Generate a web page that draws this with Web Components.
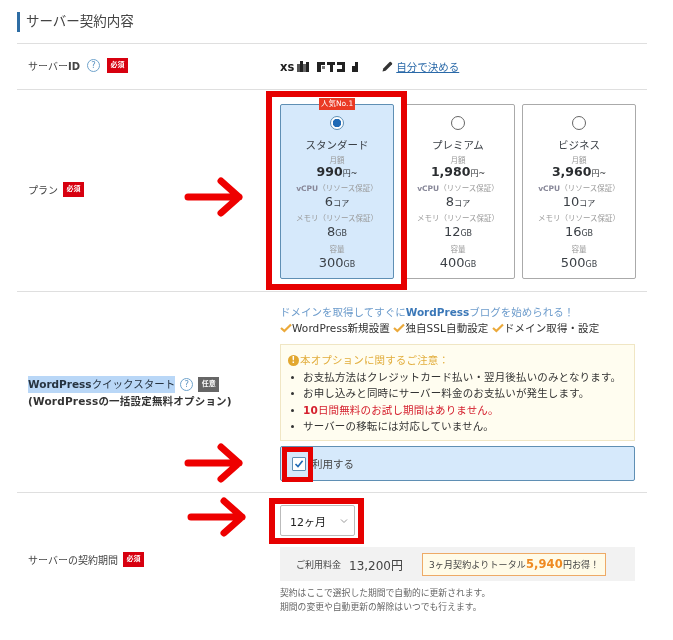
<!DOCTYPE html>
<html lang="ja"><head><meta charset="utf-8"><title>サーバー契約内容</title>
<style>
html,body{margin:0;padding:0;background:#fff}
body{width:673px;height:640px;overflow:hidden;position:relative;font-family:"DejaVu Sans","Noto Sans CJK JP",sans-serif;color:#3a3f45;filter:blur(.35px)}
</style></head><body>
<x-page>
  <x-heading>サーバー契約内容</x-heading>
  <x-row h="46" align="center" pad="0">
    <span slot="label">サーバー<b>ID</b></span><x-help slot="label" style="margin:0 2px"></x-help><x-tag slot="label">必須</x-tag>
    <x-server-id></x-server-id>
  </x-row>
  <x-row h="202" align="center" pad="0">
    <span slot="label">プラン</span><x-tag slot="label">必須</x-tag>
    <x-plans>
      <x-plan selected name="スタンダード" price="990" cpu="6" mem="8" disk="300"></x-plan>
      <x-plan name="プレミアム" price="1,980" cpu="8" mem="12" disk="400"></x-plan>
      <x-plan name="ビジネス" price="3,960" cpu="10" mem="16" disk="500"></x-plan>
    </x-plans>
  </x-row>
  <x-row h="201" align="wp" pad="13">
    <x-wp-label slot="label"></x-wp-label>
    <x-quickstart></x-quickstart>
  </x-row>
  <x-row h="133" align="term" pad="17">
    <span slot="label">サーバーの契約期間</span><x-tag slot="label">必須</x-tag>
    <x-term></x-term>
  </x-row>
</x-page>
<x-arrow style="left:184px;top:177px"></x-arrow>
<x-arrow style="left:184px;top:443px"></x-arrow>
<x-arrow style="left:187px;top:497px"></x-arrow>
<x-redbox style="left:266px;top:91px;width:141px;height:199px" thick="6"></x-redbox>
<x-redbox style="left:282px;top:447px;width:31px;height:35px" thick="5"></x-redbox>
<x-redbox style="left:269px;top:498px;width:95px;height:46px" thick="6"></x-redbox>
<script>
const def=(name,html,init)=>customElements.define(name,class extends HTMLElement{
  connectedCallback(){
    if(this.shadowRoot)return;
    const r=this.attachShadow({mode:'open'});
    r.innerHTML=typeof html==='function'?html(this):html;
    init&&init(this,r);
  }
});
const check='<svg width="12" height="10" viewBox="0 0 12 10" style="vertical-align:-1px"><path d="M1 5 4.4 8 11 1.5" fill="none" stroke="#eba93a" stroke-width="2.2"/></svg>';
def('x-page',`<style>:host{display:block;width:630px;margin-left:17px;padding-top:12px}</style><slot></slot>`);
def('x-heading',`<style>
:host{display:block;height:20px;border-left:3px solid #2e6da4;padding-left:6px;font-size:13.5px;line-height:18px;color:#444;margin-bottom:11px}
</style><slot></slot>`);
def('x-row',e=>{
 const a=e.getAttribute('align');
 const mt=a==='wp'?'align-self:start;padding-top:71px':a==='term'?'align-self:start;padding-top:42px':'align-self:center';
 return `<style>
:host{display:grid;grid-template-columns:263px 1fr;box-sizing:border-box;height:${e.getAttribute('h')}px;border-top:1px solid #dfdfdf;font-size:10px;color:#444;padding-top:${e.getAttribute('pad')}px}
.l{${mt};display:flex;align-items:center;gap:5px;padding-left:11px;margin-top:${a==='wp'||a==='term'?0:-3}px}
.r{min-width:0;align-self:${a==='center'?'center':'start'};padding-right:12px}
</style><div class="l"><slot name="label"></slot></div><div class="r"><slot></slot></div>`});
def('x-tag',`<style>
:host{display:inline-block;background:#d7000f;color:#fff;font-size:7px;line-height:15px;height:15px;padding:0 3.5px;font-weight:700}
</style><slot></slot>`);
def('x-help',`<style>:host{display:inline-flex;width:13px;height:13px;box-sizing:border-box;border:1px solid #6fa3cc;border-radius:50%;color:#5d93c0;font-size:8.5px;align-items:center;justify-content:center;line-height:1}</style>?`);
def('x-server-id',`<style>
:host{display:flex;align-items:center;height:20px;font-size:11.5px;font-weight:700;color:#222}
svg{margin-left:2px}
.edit{margin-left:22px;margin-right:3px}
a{color:#2a69a8;text-decoration:underline;font-weight:400;font-size:10.5px}
</style><span>xs</span>
<svg width="64" height="11" viewBox="0 0 64 11"><g fill="#222">
<rect x="1" y="3" width="3" height="8" fill="#555"/><rect x="4" y="0" width="3" height="11"/><rect x="7" y="3" width="3" height="8" fill="#666"/><rect x="10" y="1" width="3" height="10"/>
<rect x="21" y="1" width="8" height="3"/><rect x="21" y="4" width="4" height="7"/><rect x="26" y="5" width="3" height="3" fill="#777"/>
<rect x="31" y="1" width="8" height="3"/><rect x="34" y="4" width="3" height="7"/>
<rect x="41" y="1" width="8" height="3"/><rect x="46" y="4" width="3" height="7"/><rect x="41" y="8" width="5" height="3"/>
<rect x="56" y="5" width="3" height="6"/><rect x="59" y="1" width="3" height="10"/></g></svg>
<svg class="edit" width="11" height="11" viewBox="0 0 11 11"><path d="M0.5 10.5 1.3 7.4 7.6 1.1a1 1 0 0 1 1.4 0l.9.9a1 1 0 0 1 0 1.4L3.6 9.7Z" fill="#333"/></svg>
<a href="#">自分で決める</a>`);
def('x-plans',`<style>:host{display:grid;grid-template-columns:repeat(3,114px);gap:7px;padding-top:1px}</style><slot></slot>`);
def('x-plan',e=>{
 const s=e.hasAttribute('selected');const g=k=>e.getAttribute(k);
 return `<style>
:host{display:block;position:relative;box-sizing:border-box;height:175px;border:1px solid ${s?'#5f8fb4':'#aaa'};border-radius:2px;background:${s?'#d6e9fb':'#fff'};text-align:center;padding-top:11px;color:#3a3f45}
.pop{position:absolute;top:-7px;left:38px;background:#ea3a24;color:#fff;font-size:7.5px;line-height:12px;padding:0 2px;white-space:nowrap}
.radio{display:block;box-sizing:border-box;width:14px;height:14px;margin:0 auto;border:1px solid ${s?'#5f8fb4':'#666'};border-radius:50%;background:${s?'radial-gradient(circle,#1e69b5 0 4px,#fff 4.5px)':'#fff'}}
.n{font-size:10.5px;line-height:15px;height:15px;margin-top:8px}
.c{font-size:7.5px;line-height:10px;height:10px;color:#999;white-space:nowrap}
.c b{font-weight:700;color:#889}
.p{font-size:12.5px;line-height:11px;height:11px;font-weight:700;color:#2a2d30;margin-bottom:7px}
.v{font-size:13px;line-height:15px;height:15px;margin-bottom:5.5px}
small{font-size:8px;font-weight:400}
.c1{margin-top:3px}
</style>${s?'<span class="pop">人気No.1</span>':''}<span class="radio"></span>
<div class="n">${g('name')}</div>
<div class="c c1">月額</div><div class="p">${g('price')}<small>円~</small></div>
<div class="c"><b>vCPU</b>（リソース保証）</div><div class="v">${g('cpu')}<small>コア</small></div>
<div class="c">メモリ（リソース保証）</div><div class="v">${g('mem')}<small>GB</small></div>
<div class="c">容量</div><div class="v">${g('disk')}<small>GB</small></div>`});
def('x-wp-label',`<style>
:host{display:block;font-size:10.5px;line-height:17px;color:#333;font-weight:400}
.t{display:flex;align-items:center;gap:5px}
mark{background:#b9d7f7;color:#263340}
b{font-weight:700}
.s{letter-spacing:.2px}
</style><div class="t"><mark><b>WordPress</b>クイックスタート</mark><x-help></x-help><x-tag style="background:#666">任意</x-tag></div>
<div class="s"><b>(WordPress</b><b>の一括設定無料オプション)</b></div>`);
def('x-quickstart',`<style>
:host{display:block;font-size:10.5px;color:#333}
.lead{color:#6d9ccc;line-height:15px;white-space:nowrap}
.lead b{color:#3b78b8}
.pts{line-height:17px;white-space:nowrap;margin-bottom:7px;letter-spacing:.1px}
.note{box-sizing:border-box;height:97px;border:1px solid #f0e6c4;background:#fffdf0;padding:7px 7px;line-height:16.5px;font-size:10.5px;letter-spacing:.15px}
.h{color:#e2ad3c;display:flex;align-items:center;gap:1px}
.h i{display:inline-flex;width:11px;height:11px;border-radius:50%;background:#e2a72f;color:#fff;font:700 8px/11px "DejaVu Sans";justify-content:center}
ul{margin:0;padding:0 0 0 15px;list-style:none}
li{position:relative;white-space:nowrap}
li:before{content:"";position:absolute;left:-12px;top:7px;width:3px;height:3px;background:#333;border-radius:50%}
.red{color:#d5202e}
.use{box-sizing:border-box;margin-top:5px;height:35px;border:1px solid #5f8fb4;border-radius:2px;background:#d6e9fb;display:flex;align-items:center;padding-left:11px;gap:6px;color:#444}
.box{box-sizing:border-box;width:14px;height:14px;border:1px solid #5f8fb4;background:#fff;border-radius:1px;display:flex}
</style><div class="lead">ドメインを取得してすぐに<b>WordPress</b>ブログを始められる！</div>
<div class="pts">${check}WordPress新規設置 ${check}独自SSL自動設定 ${check}ドメイン取得・設定</div>
<div class="note"><div class="h"><i>!</i>本オプションに関するご注意：</div>
<ul><li>お支払方法はクレジットカード払い・翌月後払いのみとなります。</li><li>お申し込みと同時にサーバー料金のお支払いが発生します。</li><li class="red"><b>10</b>日間無料のお試し期間はありません。</li><li>サーバーの移転には対応していません。</li></ul></div>
<div class="use"><span class="box"><svg width="12" height="12" viewBox="0 0 12 12"><path d="M2.5 6 5 8.6 9.6 2.8" fill="none" stroke="#1e69b5" stroke-width="1.6"/></svg></span><span>利用する</span></div>`);
def('x-term',`<style>
:host{display:block;font-size:10.5px;color:#444}
.sel{box-sizing:border-box;width:75px;height:31px;margin-top:-5px;border:1px solid #bbb;border-radius:2px;display:flex;align-items:center;justify-content:space-between;padding:0 6px 0 9px;color:#222;font-size:11px}
.fee{box-sizing:border-box;height:34px;margin-top:11px;background:#f2f2f2;display:flex;align-items:center;padding-left:16px}
.fee .k{font-size:9px;margin-right:8px}
.fee .v{font-size:12px;margin-right:19px;white-space:nowrap}
.save{box-sizing:border-box;height:23px;border:1px solid #eeaa66;background:#fffbe8;display:flex;align-items:center;padding:0 6px;font-size:9px;white-space:nowrap;letter-spacing:.12px}
.save b{color:#ef8a22;font-size:11.5px}
p{margin:5px 0 0;font-size:8.8px;line-height:14px;color:#666;white-space:nowrap}
</style><div class="sel"><span>12ヶ月</span><svg width="8" height="6" viewBox="0 0 8 6"><path d="M1 1.5 4 4.5 7 1.5" fill="none" stroke="#999"/></svg></div>
<div class="fee"><span class="k">ご利用料金</span><span class="v">13,200円</span><span class="save">3ヶ月契約よりトータル<b>5,940</b>円お得！</span></div>
<p>契約はここで選択した期間で自動的に更新されます。<br>期間の変更や自動更新の解除はいつでも行えます。</p>`);
def('x-arrow',`<style>:host{display:block;position:absolute;width:60px;height:40px}</style>
<svg width="60" height="40" viewBox="0 0 60 40"><path d="M4 20H55M37 4 55 20 37 36" fill="none" stroke="#ee0000" stroke-width="7" stroke-linecap="round" stroke-linejoin="round"/></svg>`);
def('x-redbox',e=>`<style>:host{display:block;position:absolute;box-sizing:border-box;border:${e.getAttribute('thick')||7}px solid #e60000}</style>`);
</script></body></html>
